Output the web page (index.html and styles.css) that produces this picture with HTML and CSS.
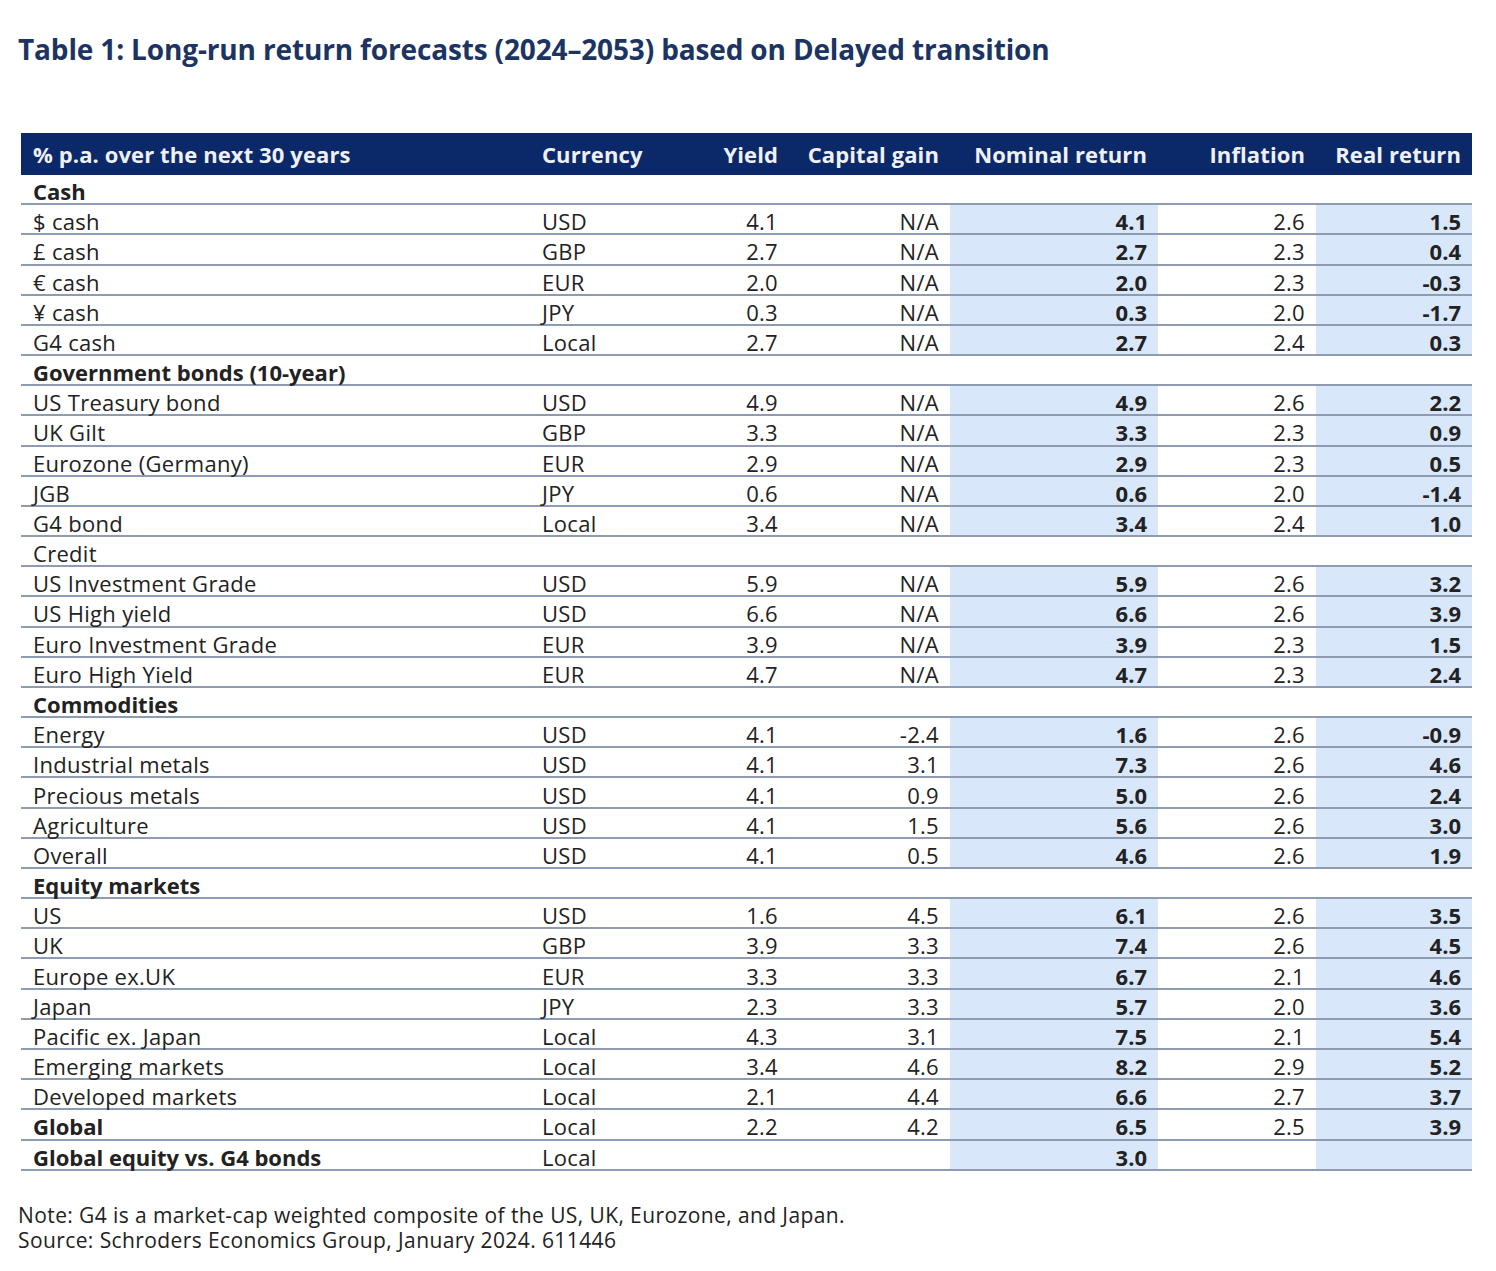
FILE: index.html
```html
<!DOCTYPE html>
<html lang="en">
<head>
<meta charset="utf-8">
<title>Table 1</title>
<link rel="stylesheet" href="styles.css">
</head>
<body>
<div class="page">
  <h1 class="title">Table 1: Long-run return forecasts (2024–2053) based on Delayed transition</h1>
  <div class="table">
    <div class="row head">
      <div class="c l">% p.a. over the next 30 years</div>
      <div class="c l">Currency</div>
      <div class="c r">Yield</div>
      <div class="c r">Capital gain</div>
      <div class="c r">Nominal return</div>
      <div class="c r">Inflation</div>
      <div class="c r">Real return</div>
    </div>

    <div class="row cat"><div class="c l b">Cash</div><div class="c"></div><div class="c"></div><div class="c"></div><div class="c"></div><div class="c"></div><div class="c"></div></div>
    <div class="row"><div class="c l">$ cash</div><div class="c l">USD</div><div class="c r">4.1</div><div class="c r">N/A</div><div class="c r s b">4.1</div><div class="c r">2.6</div><div class="c r s b">1.5</div></div>
    <div class="row"><div class="c l">£ cash</div><div class="c l">GBP</div><div class="c r">2.7</div><div class="c r">N/A</div><div class="c r s b">2.7</div><div class="c r">2.3</div><div class="c r s b">0.4</div></div>
    <div class="row"><div class="c l">€ cash</div><div class="c l">EUR</div><div class="c r">2.0</div><div class="c r">N/A</div><div class="c r s b">2.0</div><div class="c r">2.3</div><div class="c r s b">-0.3</div></div>
    <div class="row"><div class="c l">¥ cash</div><div class="c l">JPY</div><div class="c r">0.3</div><div class="c r">N/A</div><div class="c r s b">0.3</div><div class="c r">2.0</div><div class="c r s b">-1.7</div></div>
    <div class="row"><div class="c l">G4 cash</div><div class="c l">Local</div><div class="c r">2.7</div><div class="c r">N/A</div><div class="c r s b">2.7</div><div class="c r">2.4</div><div class="c r s b">0.3</div></div>

    <div class="row cat"><div class="c l b">Government bonds (10-year)</div><div class="c"></div><div class="c"></div><div class="c"></div><div class="c"></div><div class="c"></div><div class="c"></div></div>
    <div class="row"><div class="c l">US Treasury bond</div><div class="c l">USD</div><div class="c r">4.9</div><div class="c r">N/A</div><div class="c r s b">4.9</div><div class="c r">2.6</div><div class="c r s b">2.2</div></div>
    <div class="row"><div class="c l">UK Gilt</div><div class="c l">GBP</div><div class="c r">3.3</div><div class="c r">N/A</div><div class="c r s b">3.3</div><div class="c r">2.3</div><div class="c r s b">0.9</div></div>
    <div class="row"><div class="c l">Eurozone (Germany)</div><div class="c l">EUR</div><div class="c r">2.9</div><div class="c r">N/A</div><div class="c r s b">2.9</div><div class="c r">2.3</div><div class="c r s b">0.5</div></div>
    <div class="row"><div class="c l">JGB</div><div class="c l">JPY</div><div class="c r">0.6</div><div class="c r">N/A</div><div class="c r s b">0.6</div><div class="c r">2.0</div><div class="c r s b">-1.4</div></div>
    <div class="row"><div class="c l">G4 bond</div><div class="c l">Local</div><div class="c r">3.4</div><div class="c r">N/A</div><div class="c r s b">3.4</div><div class="c r">2.4</div><div class="c r s b">1.0</div></div>

    <div class="row cat"><div class="c l">Credit</div><div class="c"></div><div class="c"></div><div class="c"></div><div class="c"></div><div class="c"></div><div class="c"></div></div>
    <div class="row"><div class="c l">US Investment Grade</div><div class="c l">USD</div><div class="c r">5.9</div><div class="c r">N/A</div><div class="c r s b">5.9</div><div class="c r">2.6</div><div class="c r s b">3.2</div></div>
    <div class="row"><div class="c l">US High yield</div><div class="c l">USD</div><div class="c r">6.6</div><div class="c r">N/A</div><div class="c r s b">6.6</div><div class="c r">2.6</div><div class="c r s b">3.9</div></div>
    <div class="row"><div class="c l">Euro Investment Grade</div><div class="c l">EUR</div><div class="c r">3.9</div><div class="c r">N/A</div><div class="c r s b">3.9</div><div class="c r">2.3</div><div class="c r s b">1.5</div></div>
    <div class="row"><div class="c l">Euro High Yield</div><div class="c l">EUR</div><div class="c r">4.7</div><div class="c r">N/A</div><div class="c r s b">4.7</div><div class="c r">2.3</div><div class="c r s b">2.4</div></div>

    <div class="row cat"><div class="c l b">Commodities</div><div class="c"></div><div class="c"></div><div class="c"></div><div class="c"></div><div class="c"></div><div class="c"></div></div>
    <div class="row"><div class="c l">Energy</div><div class="c l">USD</div><div class="c r">4.1</div><div class="c r">-2.4</div><div class="c r s b">1.6</div><div class="c r">2.6</div><div class="c r s b">-0.9</div></div>
    <div class="row"><div class="c l">Industrial metals</div><div class="c l">USD</div><div class="c r">4.1</div><div class="c r">3.1</div><div class="c r s b">7.3</div><div class="c r">2.6</div><div class="c r s b">4.6</div></div>
    <div class="row"><div class="c l">Precious metals</div><div class="c l">USD</div><div class="c r">4.1</div><div class="c r">0.9</div><div class="c r s b">5.0</div><div class="c r">2.6</div><div class="c r s b">2.4</div></div>
    <div class="row"><div class="c l">Agriculture</div><div class="c l">USD</div><div class="c r">4.1</div><div class="c r">1.5</div><div class="c r s b">5.6</div><div class="c r">2.6</div><div class="c r s b">3.0</div></div>
    <div class="row"><div class="c l">Overall</div><div class="c l">USD</div><div class="c r">4.1</div><div class="c r">0.5</div><div class="c r s b">4.6</div><div class="c r">2.6</div><div class="c r s b">1.9</div></div>

    <div class="row cat"><div class="c l b">Equity markets</div><div class="c"></div><div class="c"></div><div class="c"></div><div class="c"></div><div class="c"></div><div class="c"></div></div>
    <div class="row"><div class="c l">US</div><div class="c l">USD</div><div class="c r">1.6</div><div class="c r">4.5</div><div class="c r s b">6.1</div><div class="c r">2.6</div><div class="c r s b">3.5</div></div>
    <div class="row"><div class="c l">UK</div><div class="c l">GBP</div><div class="c r">3.9</div><div class="c r">3.3</div><div class="c r s b">7.4</div><div class="c r">2.6</div><div class="c r s b">4.5</div></div>
    <div class="row"><div class="c l">Europe ex.UK</div><div class="c l">EUR</div><div class="c r">3.3</div><div class="c r">3.3</div><div class="c r s b">6.7</div><div class="c r">2.1</div><div class="c r s b">4.6</div></div>
    <div class="row"><div class="c l">Japan</div><div class="c l">JPY</div><div class="c r">2.3</div><div class="c r">3.3</div><div class="c r s b">5.7</div><div class="c r">2.0</div><div class="c r s b">3.6</div></div>
    <div class="row"><div class="c l">Pacific ex. Japan</div><div class="c l">Local</div><div class="c r">4.3</div><div class="c r">3.1</div><div class="c r s b">7.5</div><div class="c r">2.1</div><div class="c r s b">5.4</div></div>
    <div class="row"><div class="c l">Emerging markets</div><div class="c l">Local</div><div class="c r">3.4</div><div class="c r">4.6</div><div class="c r s b">8.2</div><div class="c r">2.9</div><div class="c r s b">5.2</div></div>
    <div class="row"><div class="c l">Developed markets</div><div class="c l">Local</div><div class="c r">2.1</div><div class="c r">4.4</div><div class="c r s b">6.6</div><div class="c r">2.7</div><div class="c r s b">3.7</div></div>
    <div class="row"><div class="c l b">Global</div><div class="c l">Local</div><div class="c r">2.2</div><div class="c r">4.2</div><div class="c r s b">6.5</div><div class="c r">2.5</div><div class="c r s b">3.9</div></div>
    <div class="row"><div class="c l b">Global equity vs. G4 bonds</div><div class="c l">Local</div><div class="c r"></div><div class="c r"></div><div class="c r s b">3.0</div><div class="c r"></div><div class="c r s b"></div></div>
  </div>
  <div class="notes">
    <p>Note: G4 is a market-cap weighted composite of the US, UK, Eurozone, and Japan.</p>
    <p>Source: Schroders Economics Group, January 2024. 611446</p>
  </div>
</div>
</body>
</html>
```

FILE: styles.css
```css
* { box-sizing: border-box; }
html, body { margin: 0; padding: 0; background: #ffffff; }
body {
  font-family: "Open Sans", "Liberation Sans", sans-serif;
  color: #222222;
}
.page {
  padding: 30px 0 0 18px;
}
.title {
  margin: 0;
  font-size: 28px;
  line-height: 38px;
  font-weight: 700;
  color: #1c3462;
  letter-spacing: -0.15px;
}
.table {
  margin-top: 65px;
  margin-left: 3px;
  width: 1451px;
  font-size: 22px;
  line-height: 22px;
  letter-spacing: 0.3px;
}
.row {
  display: grid;
  grid-template-columns: 509px 160px 99px 161px 208px 158px 156px;
  grid-template-rows: 100%;
  height: 30.18px;
  border-bottom: 2px solid #8f9bb0;
}
.row.head {
  height: 42px;
  background: #0b2868;
  color: #eef1f8;
  font-weight: 700;
  border-bottom: none;
  letter-spacing: 0.1px;
}
.c {
  display: flex;
  align-items: center;
  white-space: nowrap;
  padding: 0 12px;
  min-height: 0;
  overflow: visible;
}
.row:not(.head) .c { padding-top: 4px; }
.c.l { justify-content: flex-start; }
.c.r { justify-content: flex-end; padding-right: 11px; }
.c.b { font-weight: 700; letter-spacing: 0; }
.c.s { background: #d9e7fb; }
.notes {
  margin-top: 32px;
  font-size: 21px;
  line-height: 25px;
  color: #222222;
  letter-spacing: 0.4px;
}
.notes p { margin: 0; }
```
